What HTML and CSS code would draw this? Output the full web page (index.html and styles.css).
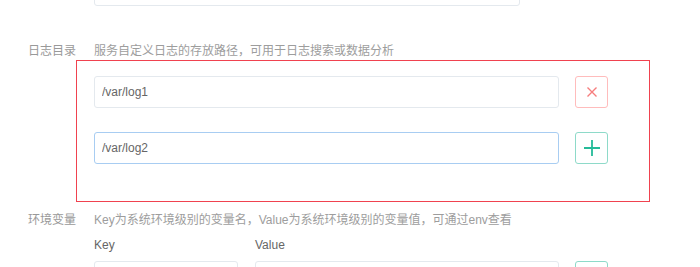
FILE: index.html
```html
<!DOCTYPE html>
<html lang="zh-CN">

<head>
    <title>服务配置</title>
    <meta charset="UTF-8" />
    <meta name="viewport" content="width=device-width, initial-scale=1.0" />
    <link rel="stylesheet" href="styles.css">
</head>

<body>
    <form class="config-form">
        <div class="prev-field">
            <input type="text" class="field-input prev-input" />
        </div>

        <!-- log directories -->
        <div class="item-head">
            <label class="item-label">日志目录</label>
            <span class="item-tip">服务自定义日志的存放路径，可用于日志搜索或数据分析</span>
        </div>
        <div class="log-box">
            <div class="log-row">
                <input type="text" class="field-input log-input" value="/var/log1" />
                <button type="button" class="icon-btn btn-remove" aria-label="删除">
                    <svg width="10" height="10" viewBox="0 0 10 10">
                        <path d="M0.5 0.5 L9.5 9.5 M9.5 0.5 L0.5 9.5" stroke="currentColor" stroke-width="1.4" fill="none" />
                    </svg>
                </button>
            </div>
            <div class="log-row">
                <input type="text" class="field-input log-input is-focus" value="/var/log2" />
                <button type="button" class="icon-btn btn-add" aria-label="添加">
                    <svg width="16" height="16" viewBox="0 0 16 16">
                        <path d="M8 0 V16 M0 8 H16" stroke="currentColor" stroke-width="1.8" fill="none" />
                    </svg>
                </button>
            </div>
        </div>

        <!-- environment variables -->
        <div class="item-head env-head">
            <label class="item-label">环境变量</label>
            <span class="item-tip">Key为系统环境级别的变量名，Value为系统环境级别的变量值，可通过env查看</span>
        </div>
        <div class="env-grid">
            <span class="col-title">Key</span>
            <span class="col-title">Value</span>
            <span></span>
            <input type="text" class="field-input" />
            <input type="text" class="field-input" />
            <button type="button" class="icon-btn btn-add" aria-label="添加">
                <svg width="16" height="16" viewBox="0 0 16 16">
                    <path d="M8 0 V16 M0 8 H16" stroke="currentColor" stroke-width="1.8" fill="none" />
                </svg>
            </button>
        </div>
    </form>
</body>

</html>
```

FILE: styles.css
```css
body {
    margin: 0;
    background-color: #fff;
    font-family: "Liberation Sans", "Noto Sans CJK SC", sans-serif;
    font-size: 12px;
    color: #666;
    overflow: hidden;
}

input,
button {
    font-family: inherit;
    font-size: inherit;
}

.field-input {
    box-sizing: border-box;
    height: 32px;
    padding: 0 7px;
    border: 1px solid #e4e9ee;
    border-radius: 3px;
    color: #666;
    background-color: #fff;
    outline: none;
}

.field-input.is-focus {
    border-color: #a8cdf2;
}

.prev-field {
    margin-left: 94px;
    margin-top: -26px;
}

.prev-input {
    display: block;
    width: 426px;
}

.item-head {
    display: flex;
    gap: 18px;
    margin-top: 36px;
    line-height: 18px;
}

.item-label {
    width: 76px;
    text-align: right;
    color: #999;
}

.item-tip {
    color: #9d9d9d;
}

.log-box {
    box-sizing: border-box;
    width: 574px;
    margin-left: 76px;
    padding: 15px 0 37px 17px;
    border: 1px solid #f0424f;
    display: flex;
    flex-direction: column;
    gap: 24px;
}

.log-row {
    display: flex;
    gap: 16px;
}

.log-input {
    width: 465px;
}

.icon-btn {
    box-sizing: border-box;
    width: 33px;
    height: 32px;
    padding: 0;
    border: 1px solid;
    border-radius: 3px;
    background-color: #fff;
    display: flex;
    align-items: center;
    justify-content: center;
}

.btn-remove {
    border-color: #ffbcbc;
    color: #f67d7d;
}

.btn-add {
    border-color: #8edac9;
    color: #25bb99;
}

.env-head {
    margin-top: 9px;
}

.env-grid {
    display: grid;
    grid-template-columns: 144px 304px 33px;
    column-gap: 17px;
    row-gap: 7px;
    margin-top: 7px;
    margin-left: 94px;
    line-height: 18px;
}

.env-grid .icon-btn {
    margin-left: -1px;
}

.col-title {
    color: #666;
}
```
